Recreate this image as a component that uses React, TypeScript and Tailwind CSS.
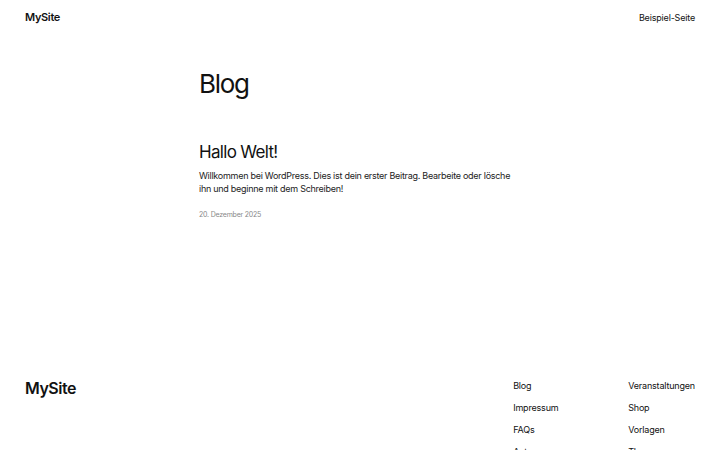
export default function App() {
  const linksLeft = ["Blog", "Impressum", "FAQs", "Autoren"];
  const linksRight = ["Veranstaltungen", "Shop", "Vorlagen", "Themes"];

  return (
    <div className="min-h-[450px] bg-white text-[#111111] font-['Inter',sans-serif] overflow-hidden">
      {/* Header */}
      <header className="flex items-center justify-between px-[25px] h-[35px]">
        <a className="text-[11px] font-semibold tracking-[-0.03em]">MySite</a>
        <nav className="text-[9px] tracking-[-0.02em] text-[#111111]">Beispiel-Seite</nav>
      </header>

      {/* Main */}
      <main className="w-[322px] mx-auto pt-[36px]">
        <h1 className="text-[26px] leading-none tracking-[-0.05em] font-normal">Blog</h1>

        <article className="mt-[47px]">
          <h2 className="text-[17px] leading-none tracking-[-0.04em]">Hallo Welt!</h2>
          <p className="mt-[8px] text-[9px] leading-[13px] tracking-[-0.03em] text-[#222222]">
            Willkommen bei WordPress. Dies ist dein erster Beitrag. Bearbeite oder lösche
            ihn und beginne mit dem Schreiben!
          </p>
          <div className="mt-[15px] text-[7px] tracking-[-0.03em] text-[#888888]">20. Dezember 2025</div>
        </article>
      </main>

      {/* Footer */}
      <footer className="mt-[155px] px-[25px] flex justify-between items-start">
        <div className="text-[16px] font-semibold tracking-[-0.03em]">MySite</div>
        <div className="flex text-[9px] tracking-[-0.02em] pt-[3px]">
          <ul className="flex flex-col gap-[8.5px] w-[115px]">
            {linksLeft.map((l) => (
              <li key={l}>{l}</li>
            ))}
          </ul>
          <ul className="flex flex-col gap-[8.5px]">
            {linksRight.map((l) => (
              <li key={l}>{l}</li>
            ))}
          </ul>
        </div>
      </footer>
    </div>
  );
}
